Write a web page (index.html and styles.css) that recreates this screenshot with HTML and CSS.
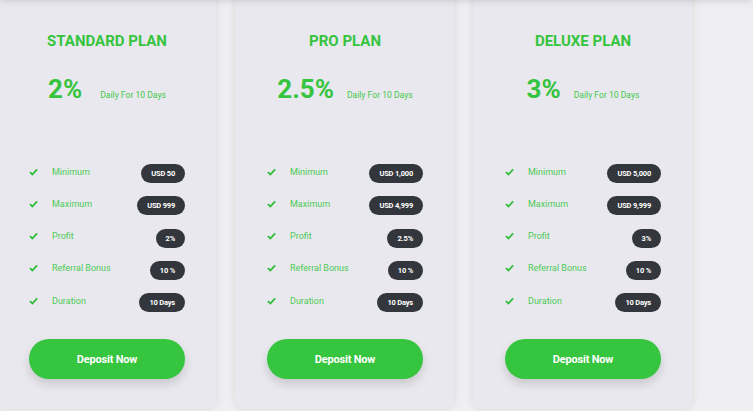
FILE: index.html
```html
<!DOCTYPE html>
<html>
<head>
<meta charset="utf-8">
<link rel="stylesheet" href="styles.css">
</head>
<body>
<div class="plans">
  <div class="card">
    <h2 class="title">STANDARD PLAN</h2>
    <div class="rate rate-wide"><span class="pct">2%</span><span class="daily">Daily For 10 Days</span></div>
    <ul class="list">
      <li class="row"><span class="label"><svg class="check" viewBox="0 0 10 8"><path d="M1 4.2 L3.8 6.8 L9 1.2" /></svg>Minimum</span><span class="pill">USD 50</span></li>
      <li class="row"><span class="label"><svg class="check" viewBox="0 0 10 8"><path d="M1 4.2 L3.8 6.8 L9 1.2" /></svg>Maximum</span><span class="pill">USD 999</span></li>
      <li class="row"><span class="label"><svg class="check" viewBox="0 0 10 8"><path d="M1 4.2 L3.8 6.8 L9 1.2" /></svg>Profit</span><span class="pill">2%</span></li>
      <li class="row"><span class="label"><svg class="check" viewBox="0 0 10 8"><path d="M1 4.2 L3.8 6.8 L9 1.2" /></svg>Referral Bonus</span><span class="pill">10 %</span></li>
      <li class="row"><span class="label"><svg class="check" viewBox="0 0 10 8"><path d="M1 4.2 L3.8 6.8 L9 1.2" /></svg>Duration</span><span class="pill">10 Days</span></li>
    </ul>
    <button class="btn">Deposit Now</button>
  </div>
  <div class="card">
    <h2 class="title">PRO PLAN</h2>
    <div class="rate"><span class="pct">2.5%</span><span class="daily">Daily For 10 Days</span></div>
    <ul class="list">
      <li class="row"><span class="label"><svg class="check" viewBox="0 0 10 8"><path d="M1 4.2 L3.8 6.8 L9 1.2" /></svg>Minimum</span><span class="pill">USD 1,000</span></li>
      <li class="row"><span class="label"><svg class="check" viewBox="0 0 10 8"><path d="M1 4.2 L3.8 6.8 L9 1.2" /></svg>Maximum</span><span class="pill">USD 4,999</span></li>
      <li class="row"><span class="label"><svg class="check" viewBox="0 0 10 8"><path d="M1 4.2 L3.8 6.8 L9 1.2" /></svg>Profit</span><span class="pill">2.5%</span></li>
      <li class="row"><span class="label"><svg class="check" viewBox="0 0 10 8"><path d="M1 4.2 L3.8 6.8 L9 1.2" /></svg>Referral Bonus</span><span class="pill">10 %</span></li>
      <li class="row"><span class="label"><svg class="check" viewBox="0 0 10 8"><path d="M1 4.2 L3.8 6.8 L9 1.2" /></svg>Duration</span><span class="pill">10 Days</span></li>
    </ul>
    <button class="btn">Deposit Now</button>
  </div>
  <div class="card">
    <h2 class="title">DELUXE PLAN</h2>
    <div class="rate"><span class="pct">3%</span><span class="daily">Daily For 10 Days</span></div>
    <ul class="list">
      <li class="row"><span class="label"><svg class="check" viewBox="0 0 10 8"><path d="M1 4.2 L3.8 6.8 L9 1.2" /></svg>Minimum</span><span class="pill">USD 5,000</span></li>
      <li class="row"><span class="label"><svg class="check" viewBox="0 0 10 8"><path d="M1 4.2 L3.8 6.8 L9 1.2" /></svg>Maximum</span><span class="pill">USD 9,999</span></li>
      <li class="row"><span class="label"><svg class="check" viewBox="0 0 10 8"><path d="M1 4.2 L3.8 6.8 L9 1.2" /></svg>Profit</span><span class="pill">3%</span></li>
      <li class="row"><span class="label"><svg class="check" viewBox="0 0 10 8"><path d="M1 4.2 L3.8 6.8 L9 1.2" /></svg>Referral Bonus</span><span class="pill">10 %</span></li>
      <li class="row"><span class="label"><svg class="check" viewBox="0 0 10 8"><path d="M1 4.2 L3.8 6.8 L9 1.2" /></svg>Duration</span><span class="pill">10 Days</span></li>
    </ul>
    <button class="btn">Deposit Now</button>
  </div>
</div>
</body>
</html>
```

FILE: styles.css
```css
html, body {
  margin: 0;
  padding: 0;
  height: 411px;
  overflow: hidden;
  background: #efeff2;
  font-family: Roboto, "Noto Sans", sans-serif;
}
body::before {
  content: "";
  position: fixed;
  left: 0;
  right: 0;
  top: -12px;
  height: 12px;
  box-shadow: 0 0 9px rgba(0, 0, 0, 0.16);
  z-index: 5;
}
.plans {
  display: flex;
  gap: 19px;
  margin-left: -3px;
  margin-top: -20px;
}
.card {
  width: 219px;
  box-sizing: border-box;
  background: #e9e8ee;
  border-radius: 10px;
  box-shadow: 0 0 10px rgba(0, 0, 0, 0.09);
  padding: 52px 31px 30px 32px;
  display: flex;
  flex-direction: column;
}
.title {
  margin: 0;
  font-size: 15px;
  line-height: 18px;
  font-weight: 700;
  color: #35c43e;
  text-align: center;
}
.rate {
  margin-top: 26px;
  display: flex;
  justify-content: center;
  align-items: baseline;
  gap: 13px;
}
.rate-wide {
  gap: 18px;
}
.pct {
  font-size: 26px;
  line-height: 26px;
  font-weight: 700;
  color: #35c43e;
}
.daily {
  font-size: 8.6px;
  color: #44c94c;
}
.list {
  list-style: none;
  margin: 62px 0 0;
  padding: 0;
  display: flex;
  flex-direction: column;
  gap: 13.3px;
}
.row {
  display: flex;
  justify-content: space-between;
  align-items: center;
  height: 19px;
}
.label {
  display: flex;
  align-items: center;
  font-size: 9px;
  color: #4ccb55;
  margin-top: -4px;
}
.check {
  width: 9px;
  height: 8px;
  margin-right: 14px;
  fill: none;
  stroke: #2fbd39;
  stroke-width: 2;
}
.pill {
  background: #33363c;
  color: #fff;
  font-size: 7.5px;
  font-weight: 700;
  height: 19px;
  line-height: 19px;
  padding: 0 10px;
  border-radius: 10px;
  letter-spacing: -0.2px;
}
.btn {
  margin-top: 27px;
  height: 40px;
  border: none;
  border-radius: 20px;
  background: #35c53e;
  color: #fff;
  font-family: Roboto, "Noto Sans", sans-serif;
  font-size: 11px;
  font-weight: 700;
  letter-spacing: -0.2px;
  box-shadow: 0 5px 10px rgba(0, 0, 0, 0.14);
}
```
